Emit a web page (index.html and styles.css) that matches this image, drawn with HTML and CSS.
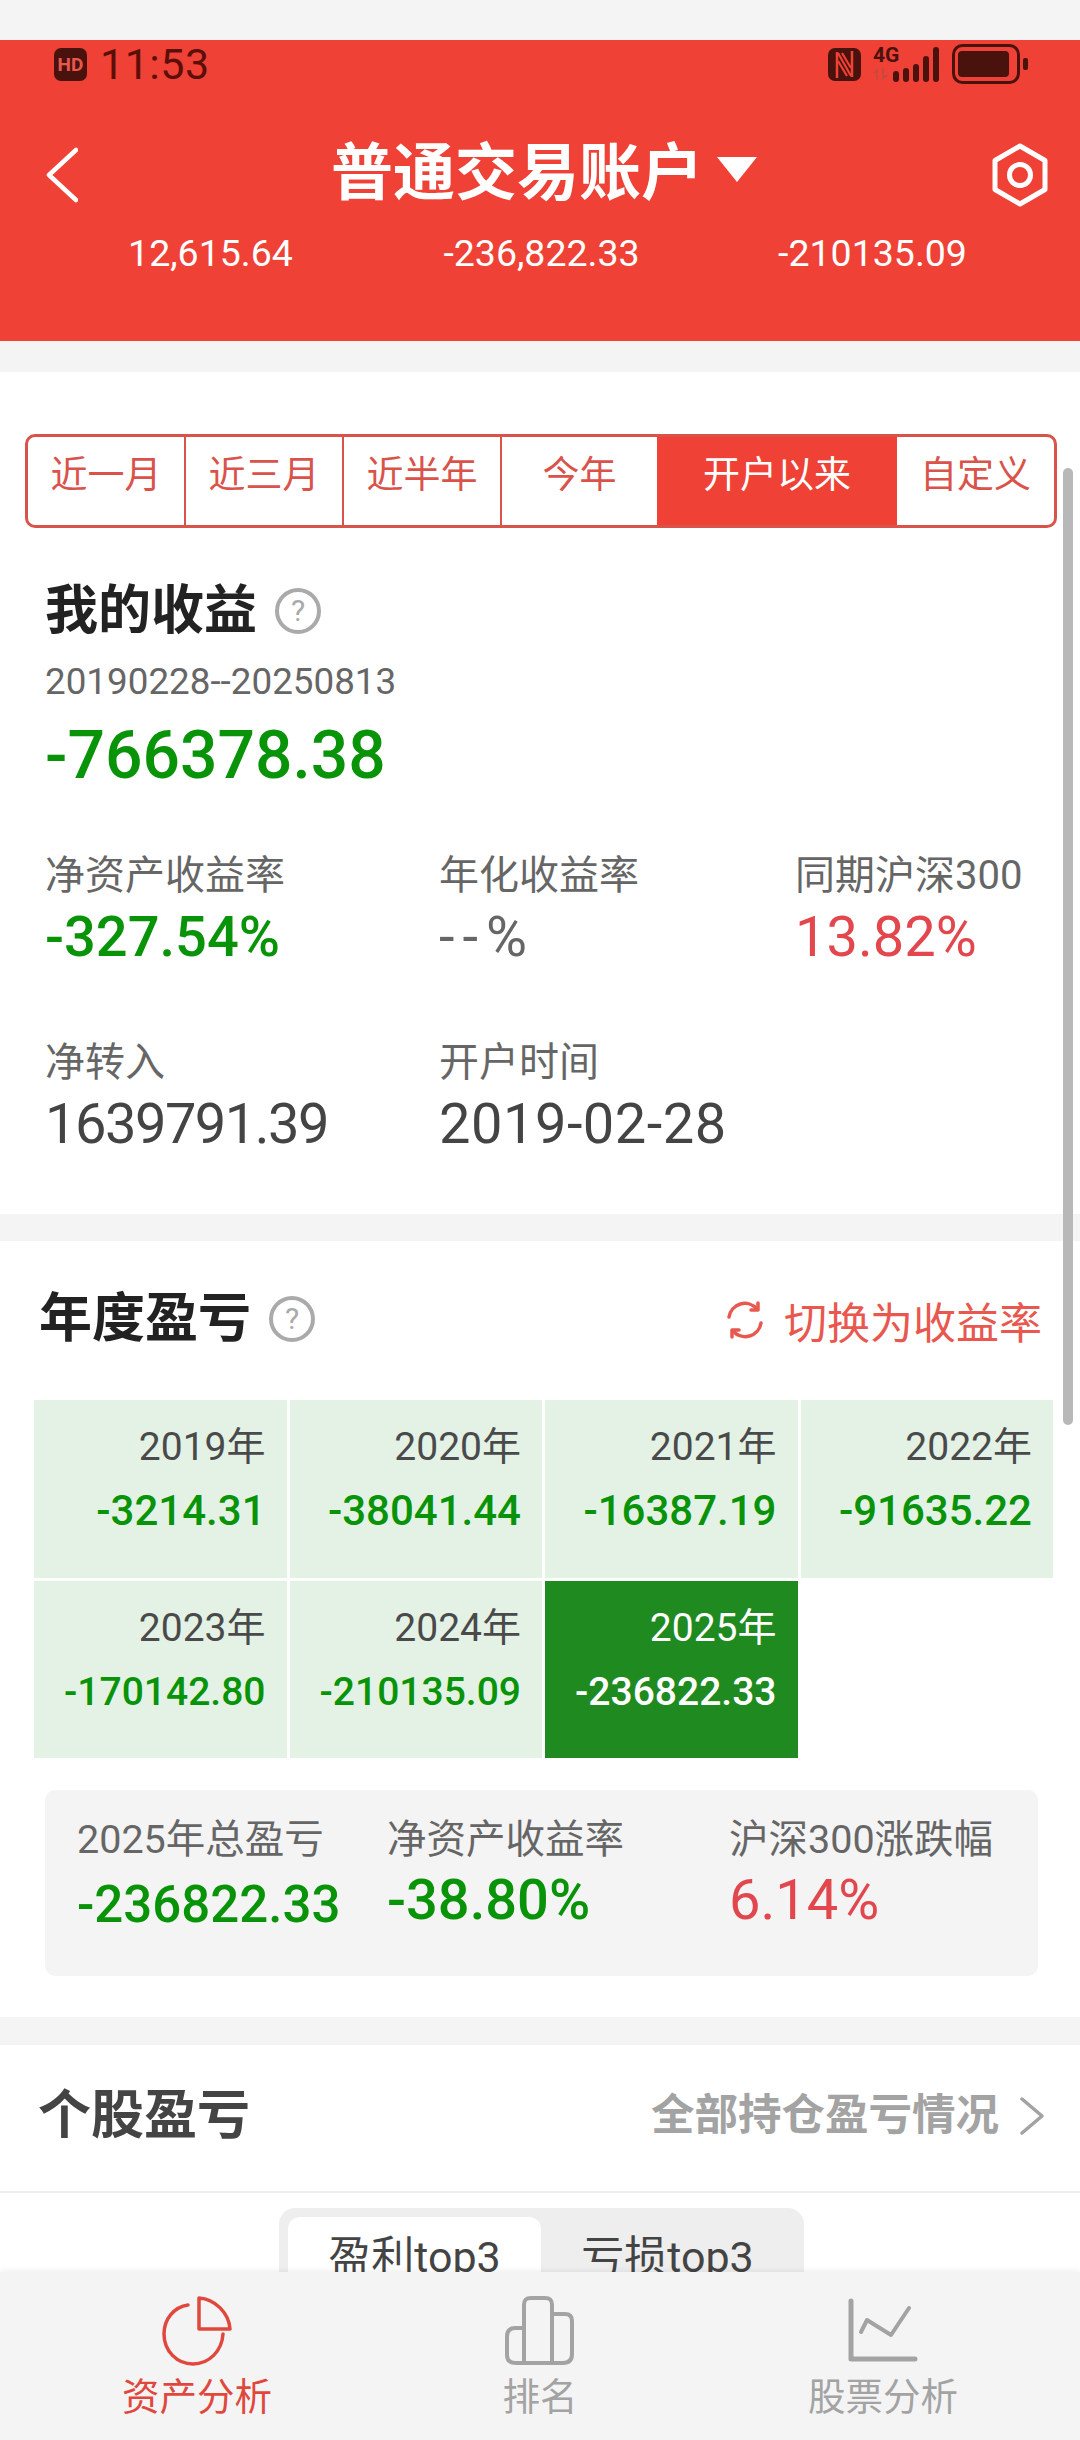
FILE: index.html
```html
<!DOCTYPE html>
<html lang="en">
<head>
    <meta charset="UTF-8">
    <meta name="viewport" content="width=device-width, initial-scale=1.0">
    <title>普通交易账户</title>
    <link rel="stylesheet" href="styles.css">
</head>
<body>
    <div class="top-gap"></div>
    <header class="header">
        <div class="status-bar">
            <div class="status-left">
                <span class="hd-badge">HD</span>
                <span class="clock">11:53</span>
            </div>
            <div class="status-right">
                <svg class="nfc" width="33" height="33" viewBox="0 0 33 33">
                    <rect x="0" y="0" width="33" height="33" rx="7" fill="#4a120d"/>
                    <path d="M9 30V4M24 3v26" stroke="#ef4135" stroke-width="2.500" fill="none"/>
                    <path d="M10 5l13 23M10 13l9 15M14 5l9 15" stroke="#ef4135" stroke-width="2.200" fill="none"/>
                </svg>
                <div class="net">
                    <span class="net-label">4G</span>
                    <svg class="net-arrows" width="16" height="12" viewBox="0 0 16 12">
                        <path d="M0 5l5-5v12H3V5zM9 0h2v7h5l-7 5z" fill="#c9493e"/>
                    </svg>
                </div>
                <div class="signal">
                    <i class="s1"></i><i class="s2"></i><i class="s3"></i><i class="s4"></i><i class="s5"></i>
                </div>
                <svg class="battery" width="76" height="40" viewBox="0 0 76 40">
                    <rect x="1.5" y="1.5" width="65" height="37" rx="9" fill="none" stroke="#4a120d" stroke-width="3"/>
                    <rect x="6" y="7" width="51" height="26" rx="4" fill="#4a120d"/>
                    <rect x="71" y="14" width="5" height="12" rx="2" fill="#4a120d"/>
                </svg>
            </div>
        </div>
        <div class="title-bar">
            <svg class="back" width="36" height="58" viewBox="0 0 36 58">
                <path d="M34 4L7 29l27 25" fill="none" stroke="#fff" stroke-width="4.500" stroke-linecap="round" stroke-linejoin="round"/>
            </svg>
            <div class="title">普通交易账户<span class="caret"></span></div>
            <svg class="gear" width="58" height="64" viewBox="0 0 58 64">
                <path d="M29 3l25 14.500v29L29 61 4 46.500v-29z" fill="none" stroke="#fff" stroke-width="5" stroke-linejoin="round"/>
                <circle cx="29" cy="32" r="10.500" fill="none" stroke="#fff" stroke-width="5"/>
            </svg>
        </div>
        <div class="header-stats">
            <span>12,615.64</span>
            <span>-236,822.33</span>
            <span>-210135.09</span>
        </div>
    </header>

    <main class="content">
        <div class="scrollbar"></div>

        <section class="card card-profit">
            <div class="tabs">
                <div class="tab">近一月</div>
                <div class="tab">近三月</div>
                <div class="tab">近半年</div>
                <div class="tab">今年</div>
                <div class="tab active">开户以来</div>
                <div class="tab custom">自定义</div>
            </div>
            <div class="profit-title">
                <h2>我的收益</h2>
                <span class="help">?</span>
            </div>
            <div class="date-range">20190228--20250813</div>
            <div class="profit-total green">-766378.38</div>
            <div class="metrics">
                <div class="metric">
                    <div class="label">净资产收益率</div>
                    <div class="value green">-327.54%</div>
                </div>
                <div class="metric">
                    <div class="label">年化收益率</div>
                    <div class="value gray dashes">--%</div>
                </div>
                <div class="metric">
                    <div class="label">同期沪深300</div>
                    <div class="value red">13.82%</div>
                </div>
                <div class="metric">
                    <div class="label">净转入</div>
                    <div class="value dark tight">1639791.39</div>
                </div>
                <div class="metric">
                    <div class="label">开户时间</div>
                    <div class="value dark loose">2019-02-28</div>
                </div>
            </div>
        </section>

        <section class="card card-year">
            <div class="section-head">
                <div class="section-title">
                    <h2>年度盈亏</h2>
                    <span class="help">?</span>
                </div>
                <div class="switch">
                    <svg width="40" height="38" viewBox="0 0 40 38">
                        <path d="M4 16A16 16 0 0 1 32 8M36 22A16 16 0 0 1 8 30" fill="none" stroke="#e8584e" stroke-width="3.500" stroke-linecap="round"/>
                        <path d="M33 2v7h-7M7 36v-7h7" fill="none" stroke="#e8584e" stroke-width="3.500" stroke-linecap="round" stroke-linejoin="round"/>
                    </svg>
                    <span>切换为收益率</span>
                </div>
            </div>
            <div class="year-grid">
                <div class="year-cell"><div class="year">2019年</div><div class="amount">-3214.31</div></div>
                <div class="year-cell"><div class="year">2020年</div><div class="amount">-38041.44</div></div>
                <div class="year-cell"><div class="year">2021年</div><div class="amount">-16387.19</div></div>
                <div class="year-cell"><div class="year">2022年</div><div class="amount">-91635.22</div></div>
                <div class="year-cell"><div class="year">2023年</div><div class="amount long">-170142.80</div></div>
                <div class="year-cell"><div class="year">2024年</div><div class="amount long">-210135.09</div></div>
                <div class="year-cell current"><div class="year">2025年</div><div class="amount long">-236822.33</div></div>
            </div>
            <div class="year-summary">
                <div class="sum s-a">
                    <div class="label">2025年总盈亏</div>
                    <div class="value green small">-236822.33</div>
                </div>
                <div class="sum s-b">
                    <div class="label">净资产收益率</div>
                    <div class="value green">-38.80%</div>
                </div>
                <div class="sum s-c">
                    <div class="label">沪深300涨跌幅</div>
                    <div class="value red">6.14%</div>
                </div>
            </div>
        </section>

        <section class="card card-stock">
            <div class="stock-head">
                <h2>个股盈亏</h2>
                <div class="all-link">
                    <span>全部持仓盈亏情况</span>
                    <svg width="26" height="38" viewBox="0 0 26 38">
                        <path d="M3 2l20 17L3 36" fill="none" stroke="#a3a3a3" stroke-width="3.500" stroke-linecap="round" stroke-linejoin="round"/>
                    </svg>
                </div>
            </div>
            <div class="top-tabs">
                <div class="top-tab on">盈利top3</div>
                <div class="top-tab">亏损top3</div>
            </div>
        </section>
    </main>

    <nav class="bottom-nav">
        <div class="nav-item active">
            <svg width="70" height="70" viewBox="0 0 70 70">
                <path d="M26 9C12 11 2 23 2 38c0 17 13 30 29 30 16 0 29-13 30-30" fill="none" stroke="#e0483d" stroke-width="3.500" stroke-linecap="round"/>
                <path d="M37 2c16 1 30 15 31 31H37z" fill="none" stroke="#e0483d" stroke-width="3.500" stroke-linejoin="round"/>
            </svg>
            <span>资产分析</span>
        </div>
        <div class="nav-item">
            <svg width="70" height="70" viewBox="0 0 70 70">
                <path d="M19 67V9c0-6 3-7 7-7h14c5 0 7 2 7 7v58M47 18h13c5 0 7 3 7 7v33c0 6-3 9-9 9H11c-6 0-9-3-9-8V41c0-6 3-9 8-9h9" fill="none" stroke="#a3a3a3" stroke-width="4" stroke-linejoin="round"/>
            </svg>
            <span>排名</span>
        </div>
        <div class="nav-item">
            <svg width="70" height="70" viewBox="0 0 70 70">
                <path d="M3 5v58h64" fill="none" stroke="#a3a3a3" stroke-width="5" stroke-linecap="round" stroke-linejoin="round"/>
                <path d="M13 36l6-12 24 15 18-27" fill="none" stroke="#a3a3a3" stroke-width="4" stroke-linecap="round" stroke-linejoin="round"/>
            </svg>
            <span>股票分析</span>
        </div>
    </nav>
</body>
</html>
```

FILE: styles.css
```css
* {
    box-sizing: border-box;
}
html, body {
    margin: 0;
    padding: 0;
}
body {
    width: 1080px;
    height: 2440px;
    overflow: hidden;
    position: relative;
    background-color: #f4f4f4;
    font-family: "Roboto", "Noto Sans CJK SC", sans-serif;
    color: #444;
}
h2 {
    margin: 0;
    font-size: 53px;
    font-weight: 700;
    color: #222;
}
.green { color: #099309; font-weight: 500; }
.red { color: #e2474d; }
.dark { color: #444; }
.gray { color: #666; }

/* header */
.top-gap { height: 40px; }
.header {
    height: 301px;
    background-color: #ef4135;
    color: #fff;
}
.status-bar {
    height: 44px;
    padding: 4px 52px 0 54px;
    display: flex;
    justify-content: space-between;
    align-items: center;
    color: #5a0f09;
}
.status-left, .status-right {
    display: flex;
    align-items: center;
}
.hd-badge {
    width: 33px;
    height: 33px;
    border-radius: 7px;
    background-color: #4a120d;
    color: #e8584e;
    font-size: 19px;
    font-weight: 700;
    text-align: center;
    line-height: 33px;
}
.clock {
    font-size: 43px;
    margin-left: 13px;
    line-height: 44px;
    letter-spacing: 0.5px;
}
.nfc { margin-right: 12px; }
.net {
    width: 20px;
    height: 36px;
    display: flex;
    flex-direction: column;
    line-height: 1;
}
.net-label {
    font-size: 21px;
    font-weight: 700;
    line-height: 19px;
    color: #4a120d;
}
.net-arrows {
    margin-top: 3px;
}
.signal {
    display: flex;
    align-items: flex-end;
    gap: 4px;
    height: 36px;
    margin-right: 13px;
}
.signal i {
    display: block;
    width: 6px;
    border-radius: 3px;
    background-color: #4a120d;
}
.s1 { height: 11px; }
.s2 { height: 14px; }
.s3 { height: 18px; }
.s4 { height: 26px; }
.s5 { height: 35px; }
.title-bar {
    height: 149px;
    padding: 32px 31px 0 42px;
    display: flex;
    align-items: center;
    justify-content: space-between;
}
.title {
    font-size: 62px;
    font-weight: 700;
    display: flex;
    align-items: center;
    margin: 0 0 14px 19px;
}
.caret {
    width: 0;
    height: 0;
    margin: 4px 0 0 14px;
    border-left: 20px solid transparent;
    border-right: 20px solid transparent;
    border-top: 25px solid #fff;
}
.header-stats {
    height: 40px;
    padding-left: 45px;
    display: grid;
    grid-template-columns: repeat(3, 331px);
    font-size: 37.500px;
    line-height: 40px;
    text-align: center;
}

/* sections */
.content {
    margin-top: 31px;
    position: relative;
}
.card {
    background-color: #fff;
}
.scrollbar {
    position: absolute;
    right: 7px;
    top: 96px;
    width: 10px;
    height: 957px;
    border-radius: 5px;
    background-color: #b8b8b8;
}
.card-profit {
    height: 842px;
    padding: 62px 0 0 45px;
    margin-bottom: 27px;
}
.tabs {
    width: 1032px;
    height: 94px;
    margin-left: -20px;
    display: flex;
    border: 3px solid #d9534a;
    border-radius: 10px;
    overflow: hidden;
}
.tab {
    width: 158px;
    text-align: center;
    font-size: 37px;
    line-height: 78px;
    color: #d9534a;
    border-right: 2px solid #d9534a;
}
.tab:nth-child(4) {
    border-right: 0;
    width: 155px;
}
.tab.active {
    width: 240px;
    background-color: #ef4135;
    color: #fff;
    border-right: 0;
}
.tab.custom {
    flex: 1;
    border-right: 0;
}
.profit-title, .section-title {
    display: flex;
    align-items: center;
}
.profit-title {
    margin-top: 43px;
    height: 70px;
}
.help {
    width: 46px;
    height: 46px;
    margin: 10px 0 0 18px;
    border: 4px solid #aaa;
    border-radius: 50%;
    color: #aaa;
    font-size: 30px;
    line-height: 38px;
    text-align: center;
}
.date-range {
    margin-top: 19px;
    font-size: 36.800px;
    line-height: 44px;
    color: #666;
}
.profit-total {
    margin-top: 8px;
    font-size: 66px;
    line-height: 88px;
}
.metrics {
    margin-top: 51px;
    display: grid;
    grid-template-columns: 394px 356px 1fr;
    row-gap: 69px;
}
.metric .label, .sum .label {
    font-size: 40px;
    line-height: 50px;
    color: #666;
}
.metric .value {
    font-size: 56px;
    line-height: 64px;
    margin-top: 4px;
}
.metric .tight { letter-spacing: -1.500px; }
.metric .loose { letter-spacing: 0.500px; }
.metric .dashes { letter-spacing: 8px; }

/* yearly */
.card-year {
    height: 776px;
    padding: 0 0 0 34px;
    margin-bottom: 28px;
}
.section-head {
    height: 146px;
    padding: 0 38px 0 5px;
    display: flex;
    justify-content: space-between;
    align-items: center;
}
.switch {
    display: flex;
    align-items: center;
    gap: 19px;
    margin-top: 12px;
    font-size: 43px;
    color: #e8584e;
}
.year-grid {
    display: grid;
    grid-template-columns: repeat(4, 252.500px);
    grid-auto-rows: 177.500px;
    gap: 3px;
    margin-top: 13px;
}
.year-cell {
    background-color: #e4f2e6;
    padding: 22px 21px 0 0;
    text-align: right;
}
.year {
    font-size: 39px;
    line-height: 50px;
    color: #4a4a4a;
}
.amount {
    margin-top: 14px;
    font-size: 42px;
    font-weight: 500;
    line-height: 50px;
    color: #099309;
}
.amount.long { font-size: 39px; }
.year-cell.current { background-color: #1f8a1f; }
.year-cell.current .year, .year-cell.current .amount { color: #fff; }
.year-summary {
    width: 993px;
    height: 186px;
    margin: 32px 0 0 11px;
    padding-top: 25px;
    border-radius: 10px;
    background-color: #f4f4f4;
    display: flex;
}
.sum .label { font-size: 39.500px; }
.sum .value {
    font-size: 56px;
    line-height: 60px;
    margin-top: 5px;
}
.sum .value.small {
    font-size: 51px;
    margin-top: 10px;
}
.s-a { width: 342px; padding-left: 32px; }
.s-b { width: 342px; }
.s-c { flex: 1; }

/* stocks */
.stock-head {
    height: 148px;
    padding: 0 35px 14px 38px;
    display: flex;
    justify-content: space-between;
    align-items: center;
    border-bottom: 2px solid #eee;
}
.stock-head h2 { color: #444; }
.all-link {
    display: flex;
    align-items: center;
    gap: 20px;
    font-size: 43.500px;
    font-weight: 700;
    color: #a3a3a3;
}
.all-link svg { margin-top: 10px; }
.card-stock {
    height: 300px;
}
.top-tabs {
    width: 525px;
    height: 100px;
    margin: 15px 0 0 279px;
    padding: 9px 9px 0;
    display: flex;
    background-color: #eee;
    border-radius: 16px 16px 0 0;
}
.top-tab {
    width: 253px;
    text-align: center;
    font-size: 43px;
    line-height: 80px;
    color: #444;
    border-radius: 12px 12px 0 0;
}
.top-tab.on { background-color: #fff; }

/* bottom */
.bottom-nav {
    position: absolute;
    left: 0;
    right: 0;
    bottom: 0;
    height: 168px;
    background-color: #f4f4f4;
    display: grid;
    grid-template-columns: 394px 292px 394px;
    box-shadow: 0 -2px 6px rgba(0, 0, 0, 0.06);
    padding-top: 24px;
}
.nav-item {
    display: flex;
    flex-direction: column;
    align-items: center;
    font-size: 37.500px;
    color: #a3a3a3;
}
.nav-item span {
    line-height: 46px;
    margin-top: 8px;
}
.nav-item.active { color: #e0483d; }
```
